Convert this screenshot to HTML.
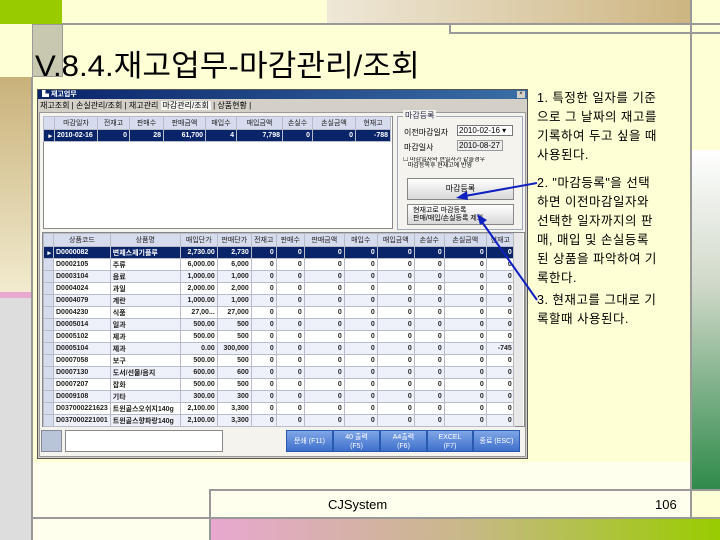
<!DOCTYPE html>
<html><head><meta charset="utf-8"><style>
*{margin:0;padding:0;box-sizing:border-box}
body{width:720px;height:540px;overflow:hidden;position:relative;background:#FFFFD6;font-family:"Liberation Sans","Noto Sans CJK KR",sans-serif}
.a{position:absolute}
.g{font-size:7px;color:#000;white-space:nowrap;overflow:hidden}
table{border-collapse:collapse;table-layout:fixed}
td{border:1px solid #B8BCC8;height:12px;padding:0 2px;font-size:7px;white-space:nowrap;overflow:hidden;text-align:right;font-weight:bold;color:#222}
td.l{text-align:left}
tr.h td{background:#D6DCEE;text-align:center;font-weight:normal;height:13px}
tr.s td{background:#0A246A;color:#fff}
tr.o td{background:#EEF0FA}
td.rh{background:#D6DCEE!important;padding:0}
.btn{position:absolute;background:linear-gradient(#7FA6E6,#3E6FCB);color:#fff;font-size:7px;text-align:center;border:1px solid #2A5AB0;line-height:9px;padding-top:2px}
.t{font-size:12.5px;line-height:19px;color:#000;letter-spacing:0.5px}
</style></head><body>
<div class="a" style="left:0;top:0;width:62px;height:24px;background:#99CC00"></div>
<div class="a" style="left:327px;top:0;width:364px;height:24px;background:linear-gradient(90deg,#EFE8D8,#CDB581)"></div>
<div class="a" style="left:62px;top:23px;width:658px;height:2px;background:#999"></div>
<div class="a" style="left:449px;top:25px;width:271px;height:9px;border-bottom:2px solid #999;border-left:2px solid #999"></div>
<div class="a" style="left:32px;top:24px;width:31px;height:53px;background:#C8C8B0;border:1px solid #999"></div>
<div class="a" style="left:0;top:77px;width:32px;height:216px;background:linear-gradient(#C9B27A,#F2EBCF)"></div>
<div class="a" style="left:0;top:292px;width:32px;height:6px;background:#E8A8D0"></div>
<div class="a" style="left:0;top:298px;width:32px;height:242px;background:#DDDDDD"></div>
<div class="a" style="left:31px;top:77px;width:2px;height:463px;background:#999"></div>
<div class="a" style="left:690px;top:0;width:2px;height:540px;background:#999"></div>
<div class="a" style="left:692px;top:150px;width:28px;height:340px;background:linear-gradient(#FFFFFF,#CFD8C8 40%,#2E8A4A)"></div>
<div class="a" style="left:33px;top:462px;width:657px;height:78px;background:#FFFFEE"></div>
<div class="a" style="left:209px;top:489px;width:511px;height:2px;background:#999"></div>
<div class="a" style="left:33px;top:517px;width:687px;height:2px;background:#999"></div>
<div class="a" style="left:209px;top:489px;width:2px;height:51px;background:#999"></div>
<div class="a" style="left:211px;top:519px;width:509px;height:21px;background:linear-gradient(90deg,#E8A8D0,#C8B888 50%,#99CC00)"></div>
<div class="a" style="left:328px;top:497px;font-size:13px">CJSystem</div>
<div class="a" style="left:655px;top:497px;font-size:13px">106</div>
<div class="a" style="left:35px;top:50px;font-size:30px;line-height:34px;white-space:nowrap;transform:scaleX(1.04);transform-origin:left">V.8.4.재고업무-마감관리/조회</div>

<div class="a" style="left:37px;top:89px;width:491px;height:370px;background:#D4D0C8;border:1px solid #555"></div>
<div class="a" style="left:38px;top:90px;width:489px;height:9px;background:linear-gradient(90deg,#0A246A,#3A6EA5)"></div>
<div class="a g" style="left:42px;top:90px;color:#fff;font-weight:bold;line-height:9px">▙ 재고업무</div>
<div class="a" style="left:517px;top:91px;width:8px;height:7px;background:#D4D0C8;font-size:6px;line-height:7px;text-align:center">×</div>
<div class="a g" style="left:40px;top:101px;font-size:8px;line-height:10px">재고조회 | 손실관리/조회 | 재고관리 <span style="background:#F4F4F0;padding:0 2px">마감관리/조회</span> | 상품현황 |</div>
<div class="a" style="left:39px;top:112px;width:487px;height:345px;background:#F4F3EE;border:1px solid #999"></div>
<div class="a" style="left:43px;top:116px;width:350px;height:113px;background:#fff;border:1px solid #888"></div>
<table class="a" style="left:43px;top:116px">
<colgroup><col style="width:11px"><col style="width:43px"><col style="width:32px"><col style="width:34px"><col style="width:42px"><col style="width:31px"><col style="width:46px"><col style="width:30px"><col style="width:43px"><col style="width:35px"></colgroup>
<tr class="h"><td class="rh"></td><td>마감일자</td><td>전재고</td><td>판매수</td><td>판매금액</td><td>매입수</td><td>매입금액</td><td>손실수</td><td>손실금액</td><td>현재고</td></tr>
<tr class="s"><td>▸</td><td class="l">2010-02-16</td><td>0</td><td>28</td><td>61,700</td><td>4</td><td>7,798</td><td>0</td><td>0</td><td>-788</td></tr>
</table>
<div class="a" style="left:397px;top:116px;width:126px;height:114px;border:1px solid #A0A8C0"></div>
<div class="a g" style="left:403px;top:110px;background:#F4F3EE;font-size:8px;padding:0 2px;color:#224">마감등록</div>
<div class="a g" style="left:404px;top:127px;font-size:8px">이전마감일자</div>
<div class="a" style="left:457px;top:125px;width:56px;height:11px;background:#fff;border:1px solid #777;font-size:8px;line-height:10px;padding-left:1px">2010-02-16 ▾</div>
<div class="a g" style="left:404px;top:142px;font-size:8px">마감일사</div>
<div class="a" style="left:457px;top:140px;width:46px;height:11px;background:#EEE;border:1px solid #999;font-size:8px;line-height:10px;padding-left:1px">2010-08-27</div>
<div class="a g" style="left:403px;top:157px;font-size:6px;line-height:6px">☐ 마감일자와 현일자가 같을경우<br>&nbsp;&nbsp;&nbsp;마감등록후 현재고에 반영</div>
<div class="a" style="left:407px;top:178px;width:107px;height:22px;background:linear-gradient(#fff,#D8D8D8);border:1px solid #888;font-size:8px;text-align:center;line-height:20px">마감등록</div>
<div class="a" style="left:407px;top:204px;width:107px;height:21px;background:linear-gradient(#fff,#D8D8D8);border:1px solid #888;font-size:7px;line-height:8px;padding:2px 0 0 5px">현재고로 마감등록<br>판매/매입/손실등록 제외</div>
<div class="a" style="left:42px;top:232px;width:483px;height:195px;background:#fff;border:1px solid #888"></div>
<table class="a" style="left:43px;top:233px">
<colgroup><col style="width:10px"><col style="width:56px"><col style="width:70px"><col style="width:37px"><col style="width:34px"><col style="width:25px"><col style="width:28px"><col style="width:40px"><col style="width:33px"><col style="width:37px"><col style="width:30px"><col style="width:42px"><col style="width:28px"></colgroup>
<tr class="h"><td class="rh"></td><td>상품코드</td><td>상품명</td><td>매입단가</td><td>판매단가</td><td>전재고</td><td>판매수</td><td>판매금액</td><td>매입수</td><td>매입금액</td><td>손실수</td><td>손실금액</td><td>현재고</td></tr>
<tr class="s"><td>▸</td><td class="l">D0000082</td><td class="l">변제스제기플루</td><td>2,730.00</td><td>2,730</td><td>0</td><td>0</td><td>0</td><td>0</td><td>0</td><td>0</td><td>0</td><td>0</td></tr>
<tr><td class="rh"></td><td class="l">D0002105</td><td class="l">주류</td><td>6,000.00</td><td>6,000</td><td>0</td><td>0</td><td>0</td><td>0</td><td>0</td><td>0</td><td>0</td><td>0</td></tr>
<tr class="o"><td class="rh"></td><td class="l">D0003104</td><td class="l">음료</td><td>1,000.00</td><td>1,000</td><td>0</td><td>0</td><td>0</td><td>0</td><td>0</td><td>0</td><td>0</td><td>0</td></tr>
<tr><td class="rh"></td><td class="l">D0004024</td><td class="l">과일</td><td>2,000.00</td><td>2,000</td><td>0</td><td>0</td><td>0</td><td>0</td><td>0</td><td>0</td><td>0</td><td>0</td></tr>
<tr class="o"><td class="rh"></td><td class="l">D0004079</td><td class="l">계란</td><td>1,000.00</td><td>1,000</td><td>0</td><td>0</td><td>0</td><td>0</td><td>0</td><td>0</td><td>0</td><td>0</td></tr>
<tr><td class="rh"></td><td class="l">D0004230</td><td class="l">식품</td><td>27,00...</td><td>27,000</td><td>0</td><td>0</td><td>0</td><td>0</td><td>0</td><td>0</td><td>0</td><td>0</td></tr>
<tr class="o"><td class="rh"></td><td class="l">D0005014</td><td class="l">일과</td><td>500.00</td><td>500</td><td>0</td><td>0</td><td>0</td><td>0</td><td>0</td><td>0</td><td>0</td><td>0</td></tr>
<tr><td class="rh"></td><td class="l">D0005102</td><td class="l">제과</td><td>500.00</td><td>500</td><td>0</td><td>0</td><td>0</td><td>0</td><td>0</td><td>0</td><td>0</td><td>0</td></tr>
<tr class="o"><td class="rh"></td><td class="l">D0005104</td><td class="l">제과</td><td>0.00</td><td>300,000</td><td>0</td><td>0</td><td>0</td><td>0</td><td>0</td><td>0</td><td>0</td><td>-745</td></tr>
<tr><td class="rh"></td><td class="l">D0007058</td><td class="l">보구</td><td>500.00</td><td>500</td><td>0</td><td>0</td><td>0</td><td>0</td><td>0</td><td>0</td><td>0</td><td>0</td></tr>
<tr class="o"><td class="rh"></td><td class="l">D0007130</td><td class="l">도서/선물/음지</td><td>600.00</td><td>600</td><td>0</td><td>0</td><td>0</td><td>0</td><td>0</td><td>0</td><td>0</td><td>0</td></tr>
<tr><td class="rh"></td><td class="l">D0007207</td><td class="l">잡화</td><td>500.00</td><td>500</td><td>0</td><td>0</td><td>0</td><td>0</td><td>0</td><td>0</td><td>0</td><td>0</td></tr>
<tr class="o"><td class="rh"></td><td class="l">D0009108</td><td class="l">기타</td><td>300.00</td><td>300</td><td>0</td><td>0</td><td>0</td><td>0</td><td>0</td><td>0</td><td>0</td><td>0</td></tr>
<tr><td class="rh"></td><td class="l">D037000221623</td><td class="l">트윈골스오쉬지140g</td><td>2,100.00</td><td>3,300</td><td>0</td><td>0</td><td>0</td><td>0</td><td>0</td><td>0</td><td>0</td><td>0</td></tr>
<tr class="o"><td class="rh"></td><td class="l">D037000221001</td><td class="l">트윈골스향파랑140g</td><td>2,100.00</td><td>3,300</td><td>0</td><td>0</td><td>0</td><td>0</td><td>0</td><td>0</td><td>0</td><td>0</td></tr>
</table>
<div class="a" style="left:513px;top:233px;width:10px;height:193px;background:#E8E8E8;border-left:1px solid #bbb"></div>
<div class="a" style="left:41px;top:430px;width:21px;height:22px;background:#B8C4D8;border:1px solid #889"></div>
<div class="a" style="left:65px;top:430px;width:158px;height:22px;background:#fff;border:1px solid #888"></div>
<div class="btn" style="left:286px;top:430px;width:47px;height:22px;line-height:18px">문쇄 (F11)</div>
<div class="btn" style="left:333px;top:430px;width:47px;height:22px">40 출력<br>(F5)</div>
<div class="btn" style="left:380px;top:430px;width:47px;height:22px">A4출력<br>(F6)</div>
<div class="btn" style="left:427px;top:430px;width:46px;height:22px">EXCEL<br>(F7)</div>
<div class="btn" style="left:473px;top:430px;width:47px;height:22px;line-height:18px">종료 (ESC)</div>

<svg class="a" style="left:0;top:0" width="720" height="540">
<line x1="537" y1="183" x2="465" y2="196" stroke="#1020C0" stroke-width="2"/>
<polygon points="456,198 467,191 468,200" fill="#1020C0"/>
<line x1="537" y1="300" x2="482" y2="222" stroke="#1020C0" stroke-width="2"/>
<polygon points="477,214 487,220 480,225" fill="#1020C0"/>
</svg>

<div class="a t" style="left:537px;top:89px;width:150px">1. 특정한 일자를 기준<br>으로 그 날짜의 재고를<br>기록하여 두고 싶을 때<br>사용된다.</div>
<div class="a t" style="left:537px;top:174px;width:150px">2. "마감등록"을 선택<br>하면 이전마감일자와<br>선택한 일자까지의 판<br>매, 매입 및 손실등록<br>된 상품을 파악하여 기<br>록한다.</div>
<div class="a t" style="left:537px;top:291px;width:150px">3. 현재고를 그대로 기<br>록할때 사용된다.</div>
</body></html>
